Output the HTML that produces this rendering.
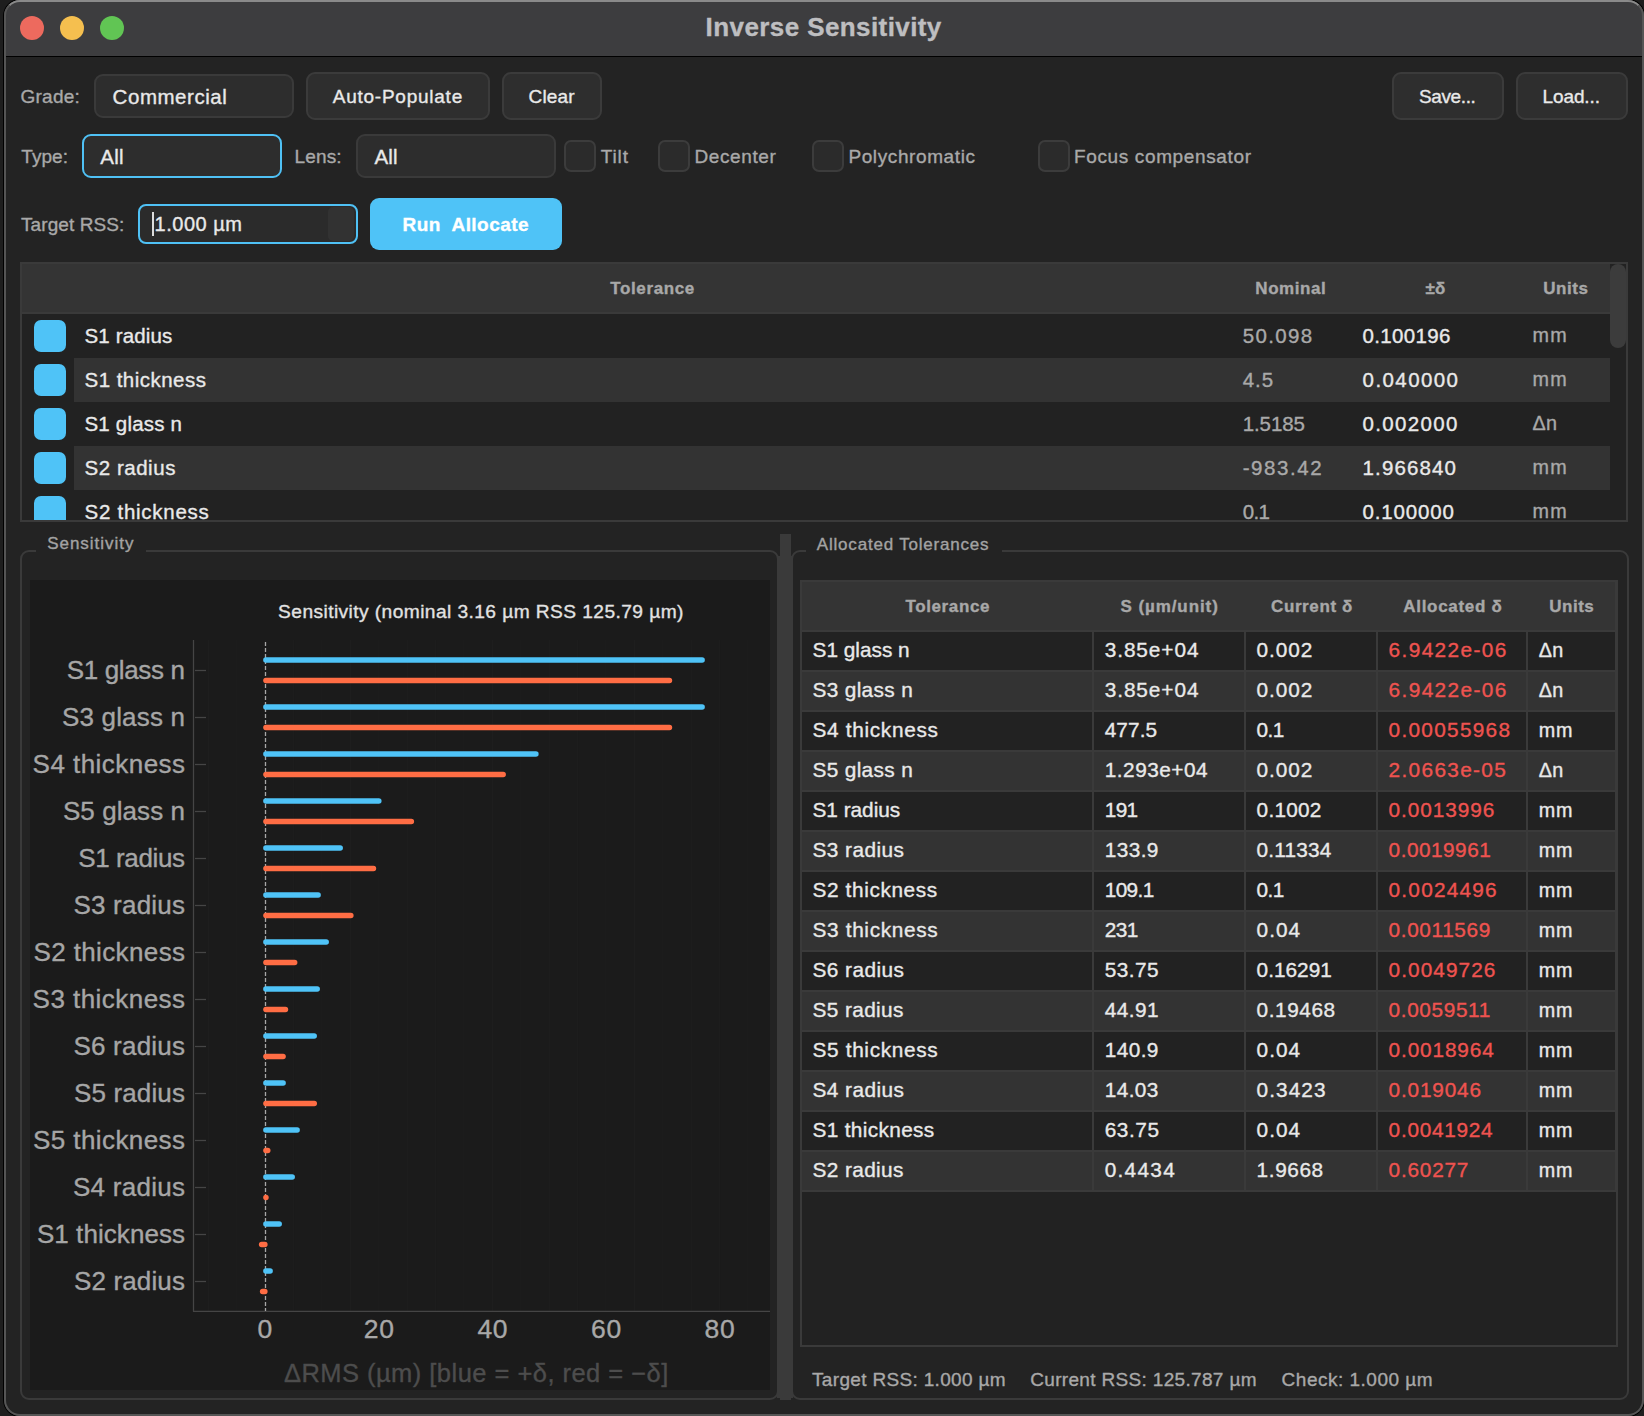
<!DOCTYPE html>
<html><head><meta charset="utf-8"><style>
html,body{margin:0;padding:0;}
body{width:1644px;height:1416px;background:#1e1e1e;position:relative;overflow:hidden;font-family:"Liberation Sans",sans-serif;}
.t{position:absolute;white-space:pre;-webkit-text-stroke:0.35px currentColor;}
.r{position:absolute;}
</style></head><body>
<div class="r" style="left:4px;top:0px;width:1639.5px;height:1415.5px;background:#232323;border-radius:16px;box-shadow:0 0 0 1px #000;"></div>
<div class="r" style="left:4px;top:0px;width:1639.5px;height:57px;background:#3d3d3f;border-radius:16px 16px 0 0;"></div>
<div class="r" style="left:4px;top:56px;width:1639.5px;height:1px;background:#000;"></div>
<div class="r" style="left:4px;top:0px;width:1639.5px;height:1415.5px;border:2px solid #555;border-top-color:#8a8a8a;border-radius:16px;box-sizing:border-box;background:transparent;"></div>
<div class="r" style="left:20px;top:16px;width:24px;height:24px;background:#ed6a5e;border-radius:50%;"></div>
<div class="r" style="left:60px;top:16px;width:24px;height:24px;background:#f5bf4f;border-radius:50%;"></div>
<div class="r" style="left:100px;top:16px;width:24px;height:24px;background:#61c554;border-radius:50%;"></div>
<div class="t" style="left:705.60px;top:13.69px;font-size:26.0px;line-height:26.0px;color:#bebec0;font-weight:700;letter-spacing:0.409px;">Inverse Sensitivity</div>
<div class="t" style="left:20.60px;top:87.12px;font-size:19.0px;line-height:19.0px;color:#a9a9a9;font-weight:400;letter-spacing:0.203px;">Grade:</div>
<div class="r" style="left:94px;top:74px;width:200px;height:44px;background:#2d2d2d;border:2px solid #3a3a3a;border-radius:9px;box-sizing:border-box;"></div>
<div class="t" style="left:112.60px;top:87.05px;font-size:20.5px;line-height:20.5px;color:#e9e9e9;font-weight:400;letter-spacing:0.539px;">Commercial</div>
<div class="r" style="left:306px;top:72px;width:184px;height:48px;background:#2e2e2e;border:2px solid #3b3b3b;border-radius:9px;box-sizing:border-box;"></div>
<div class="t" style="left:332.80px;top:87.12px;font-size:19.0px;line-height:19.0px;color:#e9e9e9;font-weight:400;letter-spacing:0.748px;">Auto-Populate</div>
<div class="r" style="left:502px;top:72px;width:100px;height:48px;background:#2e2e2e;border:2px solid #3b3b3b;border-radius:9px;box-sizing:border-box;"></div>
<div class="t" style="left:528.50px;top:87.12px;font-size:19.0px;line-height:19.0px;color:#e9e9e9;font-weight:400;letter-spacing:0.173px;">Clear</div>
<div class="r" style="left:1392px;top:72px;width:112px;height:48px;background:#2e2e2e;border:2px solid #3b3b3b;border-radius:9px;box-sizing:border-box;"></div>
<div class="t" style="left:1419.00px;top:86.92px;font-size:19.0px;line-height:19.0px;color:#e9e9e9;font-weight:400;letter-spacing:-0.374px;">Save...</div>
<div class="r" style="left:1516px;top:72px;width:112px;height:48px;background:#2e2e2e;border:2px solid #3b3b3b;border-radius:9px;box-sizing:border-box;"></div>
<div class="t" style="left:1542.50px;top:86.92px;font-size:19.0px;line-height:19.0px;color:#e9e9e9;font-weight:400;letter-spacing:-0.100px;">Load...</div>
<div class="t" style="left:21.30px;top:147.32px;font-size:19.0px;line-height:19.0px;color:#a9a9a9;font-weight:400;letter-spacing:0.057px;">Type:</div>
<div class="r" style="left:82px;top:134px;width:200px;height:44px;background:#2d2d2d;border:2px solid #4fc1f5;border-radius:9px;box-sizing:border-box;"></div>
<div class="t" style="left:100.30px;top:146.55px;font-size:20.5px;line-height:20.5px;color:#e9e9e9;font-weight:400;letter-spacing:0.212px;">All</div>
<div class="t" style="left:294.60px;top:147.32px;font-size:19.0px;line-height:19.0px;color:#a9a9a9;font-weight:400;letter-spacing:0.132px;">Lens:</div>
<div class="r" style="left:356px;top:134px;width:200px;height:44px;background:#2d2d2d;border:2px solid #3a3a3a;border-radius:9px;box-sizing:border-box;"></div>
<div class="t" style="left:374.40px;top:146.55px;font-size:20.5px;line-height:20.5px;color:#e9e9e9;font-weight:400;letter-spacing:0.162px;">All</div>
<div class="r" style="left:564px;top:140px;width:32px;height:32px;background:#2b2b2b;border:2px solid #3c3c3c;border-radius:7px;box-sizing:border-box;"></div>
<div class="t" style="left:600.70px;top:147.22px;font-size:19.0px;line-height:19.0px;color:#a9a9a9;font-weight:400;letter-spacing:0.892px;">Tilt</div>
<div class="r" style="left:658px;top:140px;width:32px;height:32px;background:#2b2b2b;border:2px solid #3c3c3c;border-radius:7px;box-sizing:border-box;"></div>
<div class="t" style="left:694.40px;top:147.22px;font-size:19.0px;line-height:19.0px;color:#a9a9a9;font-weight:400;letter-spacing:0.614px;">Decenter</div>
<div class="r" style="left:812px;top:140px;width:32px;height:32px;background:#2b2b2b;border:2px solid #3c3c3c;border-radius:7px;box-sizing:border-box;"></div>
<div class="t" style="left:848.40px;top:147.22px;font-size:19.0px;line-height:19.0px;color:#a9a9a9;font-weight:400;letter-spacing:0.607px;">Polychromatic</div>
<div class="r" style="left:1038px;top:140px;width:32px;height:32px;background:#2b2b2b;border:2px solid #3c3c3c;border-radius:7px;box-sizing:border-box;"></div>
<div class="t" style="left:1074.00px;top:147.22px;font-size:19.0px;line-height:19.0px;color:#a9a9a9;font-weight:400;letter-spacing:0.634px;">Focus compensator</div>
<div class="t" style="left:21.00px;top:214.92px;font-size:19.0px;line-height:19.0px;color:#a9a9a9;font-weight:400;letter-spacing:0.087px;">Target RSS:</div>
<div class="r" style="left:138px;top:204px;width:220px;height:40px;background:#2b2b2b;border:2px solid #4fc1f5;border-radius:8px;box-sizing:border-box;"></div>
<div class="r" style="left:328px;top:207px;width:26px;height:34px;background:#323232;border-radius:5px;"></div>
<div class="t" style="left:154.50px;top:214.07px;font-size:20.0px;line-height:20.0px;color:#e9e9e9;font-weight:400;letter-spacing:0.531px;">1.000 µm</div>
<div class="r" style="left:152px;top:212px;width:2px;height:24px;background:#dcdcdc;"></div>
<div class="r" style="left:370px;top:198px;width:192px;height:52px;background:#4fc3f7;border-radius:9px;"></div>
<div class="t" style="left:402.50px;top:215.12px;font-size:19.0px;line-height:19.0px;color:#ffffff;font-weight:700;letter-spacing:0.441px;">Run&nbsp; Allocate</div>
<div class="r" style="left:20px;top:262px;width:1608px;height:260px;background:#222222;border:2px solid #3a3a3a;box-sizing:border-box;"></div>
<div class="r" style="left:22px;top:264px;width:1588px;height:49px;background:#343434;"></div>
<div class="r" style="left:22px;top:312px;width:1588px;height:2px;background:#3a3a3a;"></div>
<div class="r" style="left:1610px;top:264px;width:16px;height:84px;background:#3c3c3c;border-radius:8px;"></div>
<div class="t" style="left:610.20px;top:279.61px;font-size:17.0px;line-height:17.0px;color:#a8a8a8;font-weight:700;letter-spacing:0.631px;">Tolerance</div>
<div class="t" style="left:1255.30px;top:279.61px;font-size:17.0px;line-height:17.0px;color:#a8a8a8;font-weight:700;letter-spacing:0.556px;">Nominal</div>
<div class="t" style="left:1425.60px;top:279.61px;font-size:17.0px;line-height:17.0px;color:#a8a8a8;font-weight:700;letter-spacing:-0.035px;">±δ</div>
<div class="t" style="left:1543.20px;top:279.61px;font-size:17.0px;line-height:17.0px;color:#a8a8a8;font-weight:700;letter-spacing:0.575px;">Units</div>
<div class="r" style="left:22px;top:314px;width:1588px;height:206px;overflow:hidden;">
<div class="r" style="left:12px;top:6px;width:32px;height:32px;background:#4fc3f7;border-radius:7px;"></div>
<div class="r" style="left:52px;top:44px;width:1536px;height:44px;background:#333333;"></div>
<div class="r" style="left:12px;top:50px;width:32px;height:32px;background:#4fc3f7;border-radius:7px;"></div>
<div class="r" style="left:12px;top:94px;width:32px;height:32px;background:#4fc3f7;border-radius:7px;"></div>
<div class="r" style="left:52px;top:132px;width:1536px;height:44px;background:#333333;"></div>
<div class="r" style="left:12px;top:138px;width:32px;height:32px;background:#4fc3f7;border-radius:7px;"></div>
<div class="r" style="left:12px;top:182px;width:32px;height:32px;background:#4fc3f7;border-radius:7px;"></div>
<div class="t" style="left:62.50px;top:11.55px;font-size:20.5px;line-height:20.5px;color:#e9e9e9;font-weight:400;letter-spacing:0.148px;">S1 radius</div>
<div class="t" style="left:1220.70px;top:11.55px;font-size:20.5px;line-height:20.5px;color:#a9a9a9;font-weight:400;letter-spacing:1.338px;">50.098</div>
<div class="t" style="left:1340.60px;top:11.55px;font-size:20.5px;line-height:20.5px;color:#e9e9e9;font-weight:400;letter-spacing:0.328px;">0.100196</div>
<div class="t" style="left:1510.40px;top:12.14px;font-size:19.8px;line-height:19.8px;color:#a9a9a9;font-weight:400;letter-spacing:1.413px;">mm</div>
<div class="t" style="left:62.50px;top:55.55px;font-size:20.5px;line-height:20.5px;color:#e9e9e9;font-weight:400;letter-spacing:0.471px;">S1 thickness</div>
<div class="t" style="left:1220.70px;top:55.55px;font-size:20.5px;line-height:20.5px;color:#a9a9a9;font-weight:400;letter-spacing:0.952px;">4.5</div>
<div class="t" style="left:1340.60px;top:55.55px;font-size:20.5px;line-height:20.5px;color:#e9e9e9;font-weight:400;letter-spacing:1.414px;">0.040000</div>
<div class="t" style="left:1510.40px;top:56.14px;font-size:19.8px;line-height:19.8px;color:#a9a9a9;font-weight:400;letter-spacing:1.413px;">mm</div>
<div class="t" style="left:62.50px;top:99.55px;font-size:20.5px;line-height:20.5px;color:#e9e9e9;font-weight:400;letter-spacing:0.198px;">S1 glass n</div>
<div class="t" style="left:1220.70px;top:99.55px;font-size:20.5px;line-height:20.5px;color:#a9a9a9;font-weight:400;letter-spacing:-0.082px;">1.5185</div>
<div class="t" style="left:1340.60px;top:99.55px;font-size:20.5px;line-height:20.5px;color:#e9e9e9;font-weight:400;letter-spacing:1.328px;">0.002000</div>
<div class="t" style="left:1510.40px;top:100.14px;font-size:19.8px;line-height:19.8px;color:#a9a9a9;font-weight:400;letter-spacing:0.365px;">Δn</div>
<div class="t" style="left:62.50px;top:143.55px;font-size:20.5px;line-height:20.5px;color:#e9e9e9;font-weight:400;letter-spacing:0.536px;">S2 radius</div>
<div class="t" style="left:1220.70px;top:143.55px;font-size:20.5px;line-height:20.5px;color:#a9a9a9;font-weight:400;letter-spacing:1.577px;">-983.42</div>
<div class="t" style="left:1340.60px;top:143.55px;font-size:20.5px;line-height:20.5px;color:#e9e9e9;font-weight:400;letter-spacing:1.099px;">1.966840</div>
<div class="t" style="left:1510.40px;top:144.14px;font-size:19.8px;line-height:19.8px;color:#a9a9a9;font-weight:400;letter-spacing:1.413px;">mm</div>
<div class="t" style="left:62.50px;top:187.55px;font-size:20.5px;line-height:20.5px;color:#e9e9e9;font-weight:400;letter-spacing:0.735px;">S2 thickness</div>
<div class="t" style="left:1220.70px;top:187.55px;font-size:20.5px;line-height:20.5px;color:#a9a9a9;font-weight:400;letter-spacing:-0.600px;">0.1</div>
<div class="t" style="left:1340.60px;top:187.55px;font-size:20.5px;line-height:20.5px;color:#e9e9e9;font-weight:400;letter-spacing:0.814px;">0.100000</div>
<div class="t" style="left:1510.40px;top:188.14px;font-size:19.8px;line-height:19.8px;color:#a9a9a9;font-weight:400;letter-spacing:1.413px;">mm</div>
</div>
<div class="r" style="left:20px;top:550px;width:759px;height:850px;border:2px solid #3a3a3a;border-radius:9px;box-sizing:border-box;"></div>
<div class="r" style="left:36px;top:546px;width:110px;height:10px;background:#232323;"></div>
<div class="t" style="left:47.20px;top:535.41px;font-size:17.0px;line-height:17.0px;color:#a3a3a3;font-weight:400;letter-spacing:0.968px;">Sensitivity</div>
<div class="r" style="left:30px;top:580px;width:740px;height:810px;background:#1b1b1b;"></div>
<div class="r" style="left:791px;top:550px;width:837.5px;height:850px;border:2px solid #3a3a3a;border-radius:9px;box-sizing:border-box;"></div>
<div class="r" style="left:806px;top:546px;width:196px;height:10px;background:#232323;"></div>
<div class="t" style="left:816.80px;top:535.61px;font-size:17.0px;line-height:17.0px;color:#a3a3a3;font-weight:400;letter-spacing:0.802px;">Allocated Tolerances</div>
<div class="r" style="left:780px;top:534px;width:11px;height:866px;background:#3a3a3a;"></div>
<div class="r" style="left:777px;top:556px;width:16px;height:842px;background:#3a3a3a;"></div>
<svg class="r" style="left:0;top:0" width="1644" height="1416">
<line x1="208.5" y1="640" x2="208.5" y2="1311" stroke="#1e1e1e" stroke-width="1"/>
<line x1="236.9" y1="640" x2="236.9" y2="1311" stroke="#1e1e1e" stroke-width="1"/>
<line x1="265.3" y1="640" x2="265.3" y2="1311" stroke="#1e1e1e" stroke-width="1"/>
<line x1="293.7" y1="640" x2="293.7" y2="1311" stroke="#1e1e1e" stroke-width="1"/>
<line x1="322.1" y1="640" x2="322.1" y2="1311" stroke="#1e1e1e" stroke-width="1"/>
<line x1="350.5" y1="640" x2="350.5" y2="1311" stroke="#1e1e1e" stroke-width="1"/>
<line x1="378.9" y1="640" x2="378.9" y2="1311" stroke="#1e1e1e" stroke-width="1"/>
<line x1="407.3" y1="640" x2="407.3" y2="1311" stroke="#1e1e1e" stroke-width="1"/>
<line x1="435.7" y1="640" x2="435.7" y2="1311" stroke="#1e1e1e" stroke-width="1"/>
<line x1="464.1" y1="640" x2="464.1" y2="1311" stroke="#1e1e1e" stroke-width="1"/>
<line x1="492.5" y1="640" x2="492.5" y2="1311" stroke="#1e1e1e" stroke-width="1"/>
<line x1="520.9" y1="640" x2="520.9" y2="1311" stroke="#1e1e1e" stroke-width="1"/>
<line x1="549.3" y1="640" x2="549.3" y2="1311" stroke="#1e1e1e" stroke-width="1"/>
<line x1="577.7" y1="640" x2="577.7" y2="1311" stroke="#1e1e1e" stroke-width="1"/>
<line x1="606.1" y1="640" x2="606.1" y2="1311" stroke="#1e1e1e" stroke-width="1"/>
<line x1="634.5" y1="640" x2="634.5" y2="1311" stroke="#1e1e1e" stroke-width="1"/>
<line x1="662.9" y1="640" x2="662.9" y2="1311" stroke="#1e1e1e" stroke-width="1"/>
<line x1="691.3" y1="640" x2="691.3" y2="1311" stroke="#1e1e1e" stroke-width="1"/>
<line x1="719.7" y1="640" x2="719.7" y2="1311" stroke="#1e1e1e" stroke-width="1"/>
<line x1="748.1" y1="640" x2="748.1" y2="1311" stroke="#1e1e1e" stroke-width="1"/>
<line x1="193.5" y1="640" x2="193.5" y2="1311.5" stroke="#454545" stroke-width="1.3"/>
<line x1="193" y1="1311.3" x2="770" y2="1311.3" stroke="#454545" stroke-width="1.3"/>
<line x1="265.5" y1="642" x2="265.5" y2="1311" stroke="#a8a8a8" stroke-width="1.3" stroke-dasharray="4 2"/>
<line x1="195" y1="670.5" x2="206" y2="670.5" stroke="#454545" stroke-width="1.3"/>
<line x1="265.9" y1="659.9" x2="702.1" y2="659.9" stroke="#4fc3f7" stroke-width="5.5" stroke-linecap="round"/>
<line x1="265.9" y1="680.5" x2="669.5" y2="680.5" stroke="#ff6d44" stroke-width="5.4" stroke-linecap="round"/>
<line x1="195" y1="717.5" x2="206" y2="717.5" stroke="#454545" stroke-width="1.3"/>
<line x1="265.9" y1="706.9" x2="702.1" y2="706.9" stroke="#4fc3f7" stroke-width="5.5" stroke-linecap="round"/>
<line x1="265.9" y1="727.5" x2="669.5" y2="727.5" stroke="#ff6d44" stroke-width="5.4" stroke-linecap="round"/>
<line x1="195" y1="764.5" x2="206" y2="764.5" stroke="#454545" stroke-width="1.3"/>
<line x1="265.9" y1="753.9" x2="535.9" y2="753.9" stroke="#4fc3f7" stroke-width="5.5" stroke-linecap="round"/>
<line x1="265.9" y1="774.5" x2="503.2" y2="774.5" stroke="#ff6d44" stroke-width="5.4" stroke-linecap="round"/>
<line x1="195" y1="811.5" x2="206" y2="811.5" stroke="#454545" stroke-width="1.3"/>
<line x1="265.9" y1="800.9" x2="378.8" y2="800.9" stroke="#4fc3f7" stroke-width="5.5" stroke-linecap="round"/>
<line x1="265.9" y1="821.5" x2="411.4" y2="821.5" stroke="#ff6d44" stroke-width="5.4" stroke-linecap="round"/>
<line x1="195" y1="858.5" x2="206" y2="858.5" stroke="#454545" stroke-width="1.3"/>
<line x1="265.9" y1="847.9" x2="340.2" y2="847.9" stroke="#4fc3f7" stroke-width="5.5" stroke-linecap="round"/>
<line x1="265.9" y1="868.5" x2="373.5" y2="868.5" stroke="#ff6d44" stroke-width="5.4" stroke-linecap="round"/>
<line x1="195" y1="905.5" x2="206" y2="905.5" stroke="#454545" stroke-width="1.3"/>
<line x1="265.9" y1="894.9" x2="318.1" y2="894.9" stroke="#4fc3f7" stroke-width="5.5" stroke-linecap="round"/>
<line x1="265.9" y1="915.5" x2="350.9" y2="915.5" stroke="#ff6d44" stroke-width="5.4" stroke-linecap="round"/>
<line x1="195" y1="952.5" x2="206" y2="952.5" stroke="#454545" stroke-width="1.3"/>
<line x1="265.9" y1="941.9" x2="326.2" y2="941.9" stroke="#4fc3f7" stroke-width="5.5" stroke-linecap="round"/>
<line x1="265.9" y1="962.5" x2="294.7" y2="962.5" stroke="#ff6d44" stroke-width="5.4" stroke-linecap="round"/>
<line x1="195" y1="999.5" x2="206" y2="999.5" stroke="#454545" stroke-width="1.3"/>
<line x1="265.9" y1="988.9" x2="317.2" y2="988.9" stroke="#4fc3f7" stroke-width="5.5" stroke-linecap="round"/>
<line x1="265.9" y1="1009.5" x2="285.5" y2="1009.5" stroke="#ff6d44" stroke-width="5.4" stroke-linecap="round"/>
<line x1="195" y1="1046.5" x2="206" y2="1046.5" stroke="#454545" stroke-width="1.3"/>
<line x1="265.9" y1="1035.9" x2="314.2" y2="1035.9" stroke="#4fc3f7" stroke-width="5.5" stroke-linecap="round"/>
<line x1="265.9" y1="1056.5" x2="283.1" y2="1056.5" stroke="#ff6d44" stroke-width="5.4" stroke-linecap="round"/>
<line x1="195" y1="1093.5" x2="206" y2="1093.5" stroke="#454545" stroke-width="1.3"/>
<line x1="265.9" y1="1082.9" x2="283.1" y2="1082.9" stroke="#4fc3f7" stroke-width="5.5" stroke-linecap="round"/>
<line x1="265.9" y1="1103.5" x2="314.3" y2="1103.5" stroke="#ff6d44" stroke-width="5.4" stroke-linecap="round"/>
<line x1="195" y1="1140.5" x2="206" y2="1140.5" stroke="#454545" stroke-width="1.3"/>
<line x1="265.9" y1="1129.9" x2="297.1" y2="1129.9" stroke="#4fc3f7" stroke-width="5.5" stroke-linecap="round"/>
<line x1="265.9" y1="1150.5" x2="267.8" y2="1150.5" stroke="#ff6d44" stroke-width="5.4" stroke-linecap="round"/>
<line x1="195" y1="1187.5" x2="206" y2="1187.5" stroke="#454545" stroke-width="1.3"/>
<line x1="265.9" y1="1176.9" x2="292.2" y2="1176.9" stroke="#4fc3f7" stroke-width="5.5" stroke-linecap="round"/>
<line x1="265.9" y1="1197.5" x2="266.0" y2="1197.5" stroke="#ff6d44" stroke-width="5.4" stroke-linecap="round"/>
<line x1="195" y1="1234.5" x2="206" y2="1234.5" stroke="#454545" stroke-width="1.3"/>
<line x1="265.9" y1="1223.9" x2="279.2" y2="1223.9" stroke="#4fc3f7" stroke-width="5.5" stroke-linecap="round"/>
<line x1="261.6" y1="1244.5" x2="264.9" y2="1244.5" stroke="#ff6d44" stroke-width="5.4" stroke-linecap="round"/>
<line x1="195" y1="1281.5" x2="206" y2="1281.5" stroke="#454545" stroke-width="1.3"/>
<line x1="265.9" y1="1270.9" x2="270.1" y2="1270.9" stroke="#4fc3f7" stroke-width="5.5" stroke-linecap="round"/>
<line x1="262.6" y1="1291.5" x2="264.9" y2="1291.5" stroke="#ff6d44" stroke-width="5.4" stroke-linecap="round"/>
</svg>
<div class="t" style="left:66.70px;top:657.29px;font-size:26.0px;line-height:26.0px;color:#a6a6a6;font-weight:400;letter-spacing:-0.344px;">S1 glass n</div>
<div class="t" style="left:61.90px;top:704.29px;font-size:26.0px;line-height:26.0px;color:#a6a6a6;font-weight:400;letter-spacing:0.190px;">S3 glass n</div>
<div class="t" style="left:32.60px;top:751.29px;font-size:26.0px;line-height:26.0px;color:#a6a6a6;font-weight:400;letter-spacing:0.455px;">S4 thickness</div>
<div class="t" style="left:62.90px;top:798.29px;font-size:26.0px;line-height:26.0px;color:#a6a6a6;font-weight:400;letter-spacing:0.078px;">S5 glass n</div>
<div class="t" style="left:78.20px;top:845.29px;font-size:26.0px;line-height:26.0px;color:#a6a6a6;font-weight:400;letter-spacing:-0.381px;">S1 radius</div>
<div class="t" style="left:73.40px;top:892.29px;font-size:26.0px;line-height:26.0px;color:#a6a6a6;font-weight:400;letter-spacing:0.219px;">S3 radius</div>
<div class="t" style="left:33.50px;top:939.29px;font-size:26.0px;line-height:26.0px;color:#a6a6a6;font-weight:400;letter-spacing:0.373px;">S2 thickness</div>
<div class="t" style="left:32.60px;top:986.29px;font-size:26.0px;line-height:26.0px;color:#a6a6a6;font-weight:400;letter-spacing:0.455px;">S3 thickness</div>
<div class="t" style="left:73.40px;top:1033.29px;font-size:26.0px;line-height:26.0px;color:#a6a6a6;font-weight:400;letter-spacing:0.219px;">S6 radius</div>
<div class="t" style="left:73.90px;top:1080.29px;font-size:26.0px;line-height:26.0px;color:#a6a6a6;font-weight:400;letter-spacing:0.156px;">S5 radius</div>
<div class="t" style="left:33.10px;top:1127.29px;font-size:26.0px;line-height:26.0px;color:#a6a6a6;font-weight:400;letter-spacing:0.410px;">S5 thickness</div>
<div class="t" style="left:73.00px;top:1174.29px;font-size:26.0px;line-height:26.0px;color:#a6a6a6;font-weight:400;letter-spacing:0.269px;">S4 radius</div>
<div class="t" style="left:36.90px;top:1221.29px;font-size:26.0px;line-height:26.0px;color:#a6a6a6;font-weight:400;letter-spacing:0.064px;">S1 thickness</div>
<div class="t" style="left:73.90px;top:1268.29px;font-size:26.0px;line-height:26.0px;color:#a6a6a6;font-weight:400;letter-spacing:0.156px;">S2 radius</div>
<div class="t" style="left:278.10px;top:601.95px;font-size:19.2px;line-height:19.2px;color:#e2e2e2;font-weight:400;letter-spacing:0.416px;">Sensitivity (nominal 3.16 µm RSS 125.79 µm)</div>
<div class="t" style="left:257.60px;top:1315.57px;font-size:26.5px;line-height:26.5px;color:#a8a8a8;font-weight:400;letter-spacing:0.000px;">0</div>
<div class="t" style="left:363.80px;top:1315.57px;font-size:26.5px;line-height:26.5px;color:#a8a8a8;font-weight:400;letter-spacing:0.732px;">20</div>
<div class="t" style="left:477.40px;top:1315.57px;font-size:26.5px;line-height:26.5px;color:#a8a8a8;font-weight:400;letter-spacing:0.732px;">40</div>
<div class="t" style="left:591.00px;top:1315.57px;font-size:26.5px;line-height:26.5px;color:#a8a8a8;font-weight:400;letter-spacing:0.732px;">60</div>
<div class="t" style="left:704.60px;top:1315.57px;font-size:26.5px;line-height:26.5px;color:#a8a8a8;font-weight:400;letter-spacing:0.732px;">80</div>
<div class="t" style="left:283.90px;top:1361.01px;font-size:25.5px;line-height:25.5px;color:#4d4d4d;font-weight:400;letter-spacing:0.464px;">ΔRMS (µm) [blue = +δ, red = −δ]</div>
<div class="r" style="left:800px;top:580px;width:818px;height:767px;background:#222222;border:2px solid #3a3a3a;box-sizing:border-box;"></div>
<div class="r" style="left:802px;top:582px;width:814px;height:48px;background:#343434;"></div>
<div class="r" style="left:802px;top:630px;width:814px;height:2px;background:#3a3a3a;"></div>
<div class="t" style="left:905.40px;top:597.71px;font-size:17.0px;line-height:17.0px;color:#a8a8a8;font-weight:700;letter-spacing:0.631px;">Tolerance</div>
<div class="t" style="left:1120.50px;top:597.71px;font-size:17.0px;line-height:17.0px;color:#a8a8a8;font-weight:700;letter-spacing:0.912px;">S (µm/unit)</div>
<div class="t" style="left:1271.00px;top:597.71px;font-size:17.0px;line-height:17.0px;color:#a8a8a8;font-weight:700;letter-spacing:0.608px;">Current δ</div>
<div class="t" style="left:1403.30px;top:597.71px;font-size:17.0px;line-height:17.0px;color:#a8a8a8;font-weight:700;letter-spacing:0.686px;">Allocated δ</div>
<div class="t" style="left:1549.20px;top:597.71px;font-size:17.0px;line-height:17.0px;color:#a8a8a8;font-weight:700;letter-spacing:0.525px;">Units</div>
<div class="r" style="left:802px;top:632px;width:813px;height:38px;background:#222222;"></div>
<div class="r" style="left:802px;top:670px;width:813px;height:2px;background:#3a3a3a;"></div>
<div class="r" style="left:802px;top:672px;width:813px;height:38px;background:#333333;"></div>
<div class="r" style="left:802px;top:710px;width:813px;height:2px;background:#3a3a3a;"></div>
<div class="r" style="left:802px;top:712px;width:813px;height:38px;background:#222222;"></div>
<div class="r" style="left:802px;top:750px;width:813px;height:2px;background:#3a3a3a;"></div>
<div class="r" style="left:802px;top:752px;width:813px;height:38px;background:#333333;"></div>
<div class="r" style="left:802px;top:790px;width:813px;height:2px;background:#3a3a3a;"></div>
<div class="r" style="left:802px;top:792px;width:813px;height:38px;background:#222222;"></div>
<div class="r" style="left:802px;top:830px;width:813px;height:2px;background:#3a3a3a;"></div>
<div class="r" style="left:802px;top:832px;width:813px;height:38px;background:#333333;"></div>
<div class="r" style="left:802px;top:870px;width:813px;height:2px;background:#3a3a3a;"></div>
<div class="r" style="left:802px;top:872px;width:813px;height:38px;background:#222222;"></div>
<div class="r" style="left:802px;top:910px;width:813px;height:2px;background:#3a3a3a;"></div>
<div class="r" style="left:802px;top:912px;width:813px;height:38px;background:#333333;"></div>
<div class="r" style="left:802px;top:950px;width:813px;height:2px;background:#3a3a3a;"></div>
<div class="r" style="left:802px;top:952px;width:813px;height:38px;background:#222222;"></div>
<div class="r" style="left:802px;top:990px;width:813px;height:2px;background:#3a3a3a;"></div>
<div class="r" style="left:802px;top:992px;width:813px;height:38px;background:#333333;"></div>
<div class="r" style="left:802px;top:1030px;width:813px;height:2px;background:#3a3a3a;"></div>
<div class="r" style="left:802px;top:1032px;width:813px;height:38px;background:#222222;"></div>
<div class="r" style="left:802px;top:1070px;width:813px;height:2px;background:#3a3a3a;"></div>
<div class="r" style="left:802px;top:1072px;width:813px;height:38px;background:#333333;"></div>
<div class="r" style="left:802px;top:1110px;width:813px;height:2px;background:#3a3a3a;"></div>
<div class="r" style="left:802px;top:1112px;width:813px;height:38px;background:#222222;"></div>
<div class="r" style="left:802px;top:1150px;width:813px;height:2px;background:#3a3a3a;"></div>
<div class="r" style="left:802px;top:1152px;width:813px;height:38px;background:#333333;"></div>
<div class="r" style="left:802px;top:1190px;width:813px;height:2px;background:#3a3a3a;"></div>
<div class="r" style="left:1092px;top:632px;width:2px;height:560px;background:#3a3a3a;"></div>
<div class="r" style="left:1244px;top:632px;width:2px;height:560px;background:#3a3a3a;"></div>
<div class="r" style="left:1376px;top:632px;width:2px;height:560px;background:#3a3a3a;"></div>
<div class="r" style="left:1526px;top:632px;width:2px;height:560px;background:#3a3a3a;"></div>
<div class="r" style="left:1615px;top:582px;width:1px;height:610px;background:#3a3a3a;"></div>
<div class="t" style="left:812.50px;top:640.19px;font-size:20.8px;line-height:20.8px;color:#e9e9e9;font-weight:400;letter-spacing:0.009px;">S1 glass n</div>
<div class="t" style="left:1104.70px;top:640.19px;font-size:20.8px;line-height:20.8px;color:#e9e9e9;font-weight:400;letter-spacing:0.923px;">3.85e+04</div>
<div class="t" style="left:1256.60px;top:640.19px;font-size:20.8px;line-height:20.8px;color:#e9e9e9;font-weight:400;letter-spacing:0.940px;">0.002</div>
<div class="t" style="left:1388.60px;top:640.19px;font-size:20.8px;line-height:20.8px;color:#ef5350;font-weight:400;letter-spacing:1.384px;">6.9422e-06</div>
<div class="t" style="left:1538.70px;top:641.04px;font-size:19.8px;line-height:19.8px;color:#e9e9e9;font-weight:400;letter-spacing:0.265px;">Δn</div>
<div class="t" style="left:812.50px;top:680.19px;font-size:20.8px;line-height:20.8px;color:#e9e9e9;font-weight:400;letter-spacing:0.343px;">S3 glass n</div>
<div class="t" style="left:1104.70px;top:680.19px;font-size:20.8px;line-height:20.8px;color:#e9e9e9;font-weight:400;letter-spacing:0.923px;">3.85e+04</div>
<div class="t" style="left:1256.60px;top:680.19px;font-size:20.8px;line-height:20.8px;color:#e9e9e9;font-weight:400;letter-spacing:0.940px;">0.002</div>
<div class="t" style="left:1388.60px;top:680.19px;font-size:20.8px;line-height:20.8px;color:#ef5350;font-weight:400;letter-spacing:1.384px;">6.9422e-06</div>
<div class="t" style="left:1538.70px;top:681.04px;font-size:19.8px;line-height:19.8px;color:#e9e9e9;font-weight:400;letter-spacing:0.265px;">Δn</div>
<div class="t" style="left:812.50px;top:720.19px;font-size:20.8px;line-height:20.8px;color:#e9e9e9;font-weight:400;letter-spacing:0.680px;">S4 thickness</div>
<div class="t" style="left:1104.70px;top:720.19px;font-size:20.8px;line-height:20.8px;color:#e9e9e9;font-weight:400;letter-spacing:0.090px;">477.5</div>
<div class="t" style="left:1256.60px;top:720.19px;font-size:20.8px;line-height:20.8px;color:#e9e9e9;font-weight:400;letter-spacing:-0.600px;">0.1</div>
<div class="t" style="left:1388.60px;top:720.19px;font-size:20.8px;line-height:20.8px;color:#ef5350;font-weight:400;letter-spacing:1.279px;">0.00055968</div>
<div class="t" style="left:1538.70px;top:721.04px;font-size:19.8px;line-height:19.8px;color:#e9e9e9;font-weight:400;letter-spacing:0.713px;">mm</div>
<div class="t" style="left:812.50px;top:760.19px;font-size:20.8px;line-height:20.8px;color:#e9e9e9;font-weight:400;letter-spacing:0.343px;">S5 glass n</div>
<div class="t" style="left:1104.70px;top:760.19px;font-size:20.8px;line-height:20.8px;color:#e9e9e9;font-weight:400;letter-spacing:0.512px;">1.293e+04</div>
<div class="t" style="left:1256.60px;top:760.19px;font-size:20.8px;line-height:20.8px;color:#e9e9e9;font-weight:400;letter-spacing:0.940px;">0.002</div>
<div class="t" style="left:1388.60px;top:760.19px;font-size:20.8px;line-height:20.8px;color:#ef5350;font-weight:400;letter-spacing:1.328px;">2.0663e-05</div>
<div class="t" style="left:1538.70px;top:761.04px;font-size:19.8px;line-height:19.8px;color:#e9e9e9;font-weight:400;letter-spacing:0.265px;">Δn</div>
<div class="t" style="left:812.50px;top:800.19px;font-size:20.8px;line-height:20.8px;color:#e9e9e9;font-weight:400;letter-spacing:-0.022px;">S1 radius</div>
<div class="t" style="left:1104.70px;top:800.19px;font-size:20.8px;line-height:20.8px;color:#e9e9e9;font-weight:400;letter-spacing:-0.600px;">191</div>
<div class="t" style="left:1256.60px;top:800.19px;font-size:20.8px;line-height:20.8px;color:#e9e9e9;font-weight:400;letter-spacing:0.235px;">0.1002</div>
<div class="t" style="left:1388.60px;top:800.19px;font-size:20.8px;line-height:20.8px;color:#ef5350;font-weight:400;letter-spacing:0.922px;">0.0013996</div>
<div class="t" style="left:1538.70px;top:801.04px;font-size:19.8px;line-height:19.8px;color:#e9e9e9;font-weight:400;letter-spacing:0.713px;">mm</div>
<div class="t" style="left:812.50px;top:840.19px;font-size:20.8px;line-height:20.8px;color:#e9e9e9;font-weight:400;letter-spacing:0.453px;">S3 radius</div>
<div class="t" style="left:1104.70px;top:840.19px;font-size:20.8px;line-height:20.8px;color:#e9e9e9;font-weight:400;letter-spacing:0.415px;">133.9</div>
<div class="t" style="left:1256.60px;top:840.19px;font-size:20.8px;line-height:20.8px;color:#e9e9e9;font-weight:400;letter-spacing:0.175px;">0.11334</div>
<div class="t" style="left:1388.60px;top:840.19px;font-size:20.8px;line-height:20.8px;color:#ef5350;font-weight:400;letter-spacing:0.485px;">0.0019961</div>
<div class="t" style="left:1538.70px;top:841.04px;font-size:19.8px;line-height:19.8px;color:#e9e9e9;font-weight:400;letter-spacing:0.713px;">mm</div>
<div class="t" style="left:812.50px;top:880.19px;font-size:20.8px;line-height:20.8px;color:#e9e9e9;font-weight:400;letter-spacing:0.617px;">S2 thickness</div>
<div class="t" style="left:1104.70px;top:880.19px;font-size:20.8px;line-height:20.8px;color:#e9e9e9;font-weight:400;letter-spacing:-0.600px;">109.1</div>
<div class="t" style="left:1256.60px;top:880.19px;font-size:20.8px;line-height:20.8px;color:#e9e9e9;font-weight:400;letter-spacing:-0.600px;">0.1</div>
<div class="t" style="left:1388.60px;top:880.19px;font-size:20.8px;line-height:20.8px;color:#ef5350;font-weight:400;letter-spacing:1.210px;">0.0024496</div>
<div class="t" style="left:1538.70px;top:881.04px;font-size:19.8px;line-height:19.8px;color:#e9e9e9;font-weight:400;letter-spacing:0.713px;">mm</div>
<div class="t" style="left:812.50px;top:920.19px;font-size:20.8px;line-height:20.8px;color:#e9e9e9;font-weight:400;letter-spacing:0.662px;">S3 thickness</div>
<div class="t" style="left:1104.70px;top:920.19px;font-size:20.8px;line-height:20.8px;color:#e9e9e9;font-weight:400;letter-spacing:-0.497px;">231</div>
<div class="t" style="left:1256.60px;top:920.19px;font-size:20.8px;line-height:20.8px;color:#e9e9e9;font-weight:400;letter-spacing:1.008px;">0.04</div>
<div class="t" style="left:1388.60px;top:920.19px;font-size:20.8px;line-height:20.8px;color:#ef5350;font-weight:400;letter-spacing:0.615px;">0.0011569</div>
<div class="t" style="left:1538.70px;top:921.04px;font-size:19.8px;line-height:19.8px;color:#e9e9e9;font-weight:400;letter-spacing:0.713px;">mm</div>
<div class="t" style="left:812.50px;top:960.19px;font-size:20.8px;line-height:20.8px;color:#e9e9e9;font-weight:400;letter-spacing:0.453px;">S6 radius</div>
<div class="t" style="left:1104.70px;top:960.19px;font-size:20.8px;line-height:20.8px;color:#e9e9e9;font-weight:400;letter-spacing:0.465px;">53.75</div>
<div class="t" style="left:1256.60px;top:960.19px;font-size:20.8px;line-height:20.8px;color:#e9e9e9;font-weight:400;letter-spacing:0.001px;">0.16291</div>
<div class="t" style="left:1388.60px;top:960.19px;font-size:20.8px;line-height:20.8px;color:#ef5350;font-weight:400;letter-spacing:1.060px;">0.0049726</div>
<div class="t" style="left:1538.70px;top:961.04px;font-size:19.8px;line-height:19.8px;color:#e9e9e9;font-weight:400;letter-spacing:0.713px;">mm</div>
<div class="t" style="left:812.50px;top:1000.19px;font-size:20.8px;line-height:20.8px;color:#e9e9e9;font-weight:400;letter-spacing:0.390px;">S5 radius</div>
<div class="t" style="left:1104.70px;top:1000.19px;font-size:20.8px;line-height:20.8px;color:#e9e9e9;font-weight:400;letter-spacing:0.465px;">44.91</div>
<div class="t" style="left:1256.60px;top:1000.19px;font-size:20.8px;line-height:20.8px;color:#e9e9e9;font-weight:400;letter-spacing:0.568px;">0.19468</div>
<div class="t" style="left:1388.60px;top:1000.19px;font-size:20.8px;line-height:20.8px;color:#ef5350;font-weight:400;letter-spacing:0.615px;">0.0059511</div>
<div class="t" style="left:1538.70px;top:1001.04px;font-size:19.8px;line-height:19.8px;color:#e9e9e9;font-weight:400;letter-spacing:0.713px;">mm</div>
<div class="t" style="left:812.50px;top:1040.19px;font-size:20.8px;line-height:20.8px;color:#e9e9e9;font-weight:400;letter-spacing:0.662px;">S5 thickness</div>
<div class="t" style="left:1104.70px;top:1040.19px;font-size:20.8px;line-height:20.8px;color:#e9e9e9;font-weight:400;letter-spacing:0.415px;">140.9</div>
<div class="t" style="left:1256.60px;top:1040.19px;font-size:20.8px;line-height:20.8px;color:#e9e9e9;font-weight:400;letter-spacing:1.008px;">0.04</div>
<div class="t" style="left:1388.60px;top:1040.19px;font-size:20.8px;line-height:20.8px;color:#ef5350;font-weight:400;letter-spacing:0.860px;">0.0018964</div>
<div class="t" style="left:1538.70px;top:1041.04px;font-size:19.8px;line-height:19.8px;color:#e9e9e9;font-weight:400;letter-spacing:0.713px;">mm</div>
<div class="t" style="left:812.50px;top:1080.19px;font-size:20.8px;line-height:20.8px;color:#e9e9e9;font-weight:400;letter-spacing:0.453px;">S4 radius</div>
<div class="t" style="left:1104.70px;top:1080.19px;font-size:20.8px;line-height:20.8px;color:#e9e9e9;font-weight:400;letter-spacing:0.415px;">14.03</div>
<div class="t" style="left:1256.60px;top:1080.19px;font-size:20.8px;line-height:20.8px;color:#e9e9e9;font-weight:400;letter-spacing:1.055px;">0.3423</div>
<div class="t" style="left:1388.60px;top:1080.19px;font-size:20.8px;line-height:20.8px;color:#ef5350;font-weight:400;letter-spacing:0.820px;">0.019046</div>
<div class="t" style="left:1538.70px;top:1081.04px;font-size:19.8px;line-height:19.8px;color:#e9e9e9;font-weight:400;letter-spacing:0.713px;">mm</div>
<div class="t" style="left:812.50px;top:1120.19px;font-size:20.8px;line-height:20.8px;color:#e9e9e9;font-weight:400;letter-spacing:0.344px;">S1 thickness</div>
<div class="t" style="left:1104.70px;top:1120.19px;font-size:20.8px;line-height:20.8px;color:#e9e9e9;font-weight:400;letter-spacing:0.590px;">63.75</div>
<div class="t" style="left:1256.60px;top:1120.19px;font-size:20.8px;line-height:20.8px;color:#e9e9e9;font-weight:400;letter-spacing:1.008px;">0.04</div>
<div class="t" style="left:1388.60px;top:1120.19px;font-size:20.8px;line-height:20.8px;color:#ef5350;font-weight:400;letter-spacing:0.722px;">0.0041924</div>
<div class="t" style="left:1538.70px;top:1121.04px;font-size:19.8px;line-height:19.8px;color:#e9e9e9;font-weight:400;letter-spacing:0.713px;">mm</div>
<div class="t" style="left:812.50px;top:1160.19px;font-size:20.8px;line-height:20.8px;color:#e9e9e9;font-weight:400;letter-spacing:0.390px;">S2 radius</div>
<div class="t" style="left:1104.70px;top:1160.19px;font-size:20.8px;line-height:20.8px;color:#e9e9e9;font-weight:400;letter-spacing:1.295px;">0.4434</div>
<div class="t" style="left:1256.60px;top:1160.19px;font-size:20.8px;line-height:20.8px;color:#e9e9e9;font-weight:400;letter-spacing:0.595px;">1.9668</div>
<div class="t" style="left:1388.60px;top:1160.19px;font-size:20.8px;line-height:20.8px;color:#ef5350;font-weight:400;letter-spacing:0.768px;">0.60277</div>
<div class="t" style="left:1538.70px;top:1161.04px;font-size:19.8px;line-height:19.8px;color:#e9e9e9;font-weight:400;letter-spacing:0.713px;">mm</div>
<div class="t" style="left:812.00px;top:1369.92px;font-size:19.0px;line-height:19.0px;color:#a9a9a9;font-weight:400;letter-spacing:0.331px;">Target RSS: 1.000 µm</div>
<div class="t" style="left:1030.20px;top:1369.92px;font-size:19.0px;line-height:19.0px;color:#a9a9a9;font-weight:400;letter-spacing:0.332px;">Current RSS: 125.787 µm</div>
<div class="t" style="left:1281.60px;top:1369.92px;font-size:19.0px;line-height:19.0px;color:#a9a9a9;font-weight:400;letter-spacing:0.499px;">Check: 1.000 µm</div>
</body></html>
